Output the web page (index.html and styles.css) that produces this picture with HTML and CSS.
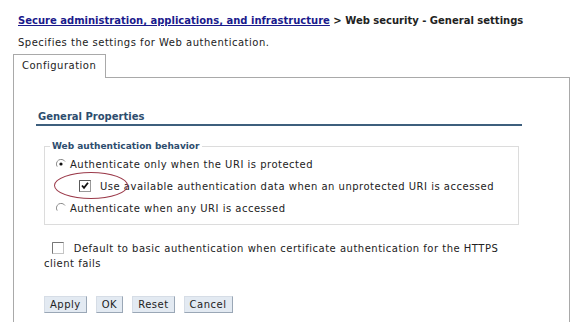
FILE: index.html
```html
<!DOCTYPE html>
<html lang="en">
  <head>
    <meta charset="UTF-8" />
    <title>Web security - General settings</title>
    <link rel="stylesheet" href="styles.css">
  </head>
  <body>
    <div class="breadcrumb">
      <a href="#">Secure administration, applications, and infrastructure</a>
      &gt; Web security - General settings
    </div>
    <p class="description">Specifies the settings for Web authentication.</p>

    <div class="tabs">
      <div class="tab">Configuration</div>
      <div class="tab-rest"></div>
    </div>

    <div class="panel">
      <h2 class="section-title">General Properties</h2>

      <fieldset class="group">
        <legend>Web authentication behavior</legend>
        <div class="option">
          <svg class="radio" width="10" height="10" viewBox="0 0 10 10">
            <path d="M9 2.5A4.5 4.5 0 0 0 1.2 7.6" fill="none" stroke="#8a8a8a" stroke-width="1"/>
            <circle cx="5" cy="5" r="1.6" fill="#111"/>
          </svg>
          <span>Authenticate only when the URI is protected</span>
        </div>
        <div class="option sub">
          <svg class="check" width="12" height="12" viewBox="0 0 12 12">
            <rect x="0.5" y="0.5" width="11" height="11" fill="#fff" stroke="#9a9a9a"/>
            <path d="M0.5 11.5V0.5H11.5" fill="none" stroke="#5a5a5a"/>
            <path d="M3 5.5l2 2.3 4-5" fill="none" stroke="#111" stroke-width="1.8"/>
          </svg>
          <span>Use available authentication data when an unprotected URI is accessed</span>
          <span class="highlight"></span>
        </div>
        <div class="option">
          <svg class="radio" width="10" height="10" viewBox="0 0 10 10">
            <path d="M9 2.5A4.5 4.5 0 0 0 1.2 7.6" fill="none" stroke="#8a8a8a" stroke-width="1"/>
          </svg>
          <span>Authenticate when any URI is accessed</span>
        </div>
      </fieldset>

      <div class="standalone">
        <svg class="check" width="12" height="12" viewBox="0 0 12 12">
          <rect x="0.5" y="0.5" width="11" height="11" fill="#fff" stroke="#c4c4c4"/>
          <path d="M0.5 11.5V0.5H11.5" fill="none" stroke="#777"/>
        </svg>
        Default to basic authentication when certificate authentication for the HTTPS client fails
      </div>

      <div class="buttons">
        <button>Apply</button>
        <button>OK</button>
        <button>Reset</button>
        <button>Cancel</button>
      </div>
    </div>
  </body>
</html>
```

FILE: styles.css
```css
* {
  box-sizing: border-box;
  margin: 0;
  padding: 0;
}

body {
  font-family: "DejaVu Sans", Verdana, sans-serif;
  font-size: 10px;
  letter-spacing: 0.5px;
  color: #222;
  background: #fff;
  padding: 14px 2px 0 13px;
}

.breadcrumb {
  font-weight: bold;
  letter-spacing: 0;
  padding-left: 5px;
  line-height: 14px;
}

.breadcrumb a {
  color: #1a1a8c;
}

.description {
  padding-left: 5px;
  margin-top: 8px;
  line-height: 14px;
}

.tabs {
  display: flex;
  margin-top: 4px;
  height: 24px;
}

.tab {
  width: 93px;
  border: 1px solid #a9a9a9;
  border-bottom: none;
  padding: 5px 0 0 8px;
}

.tab-rest {
  flex: 1;
  border-bottom: 1px solid #a9a9a9;
}

.panel {
  border: 1px solid #a9a9a9;
  border-top: none;
  border-bottom: none;
  height: 244px;
  padding: 33px 47px 0 22px;
}

.section-title {
  font-size: 10px;
  font-weight: bold;
  letter-spacing: 0;
  color: #2d4d6e;
  padding: 0 0 2px 2px;
  border-bottom: 2px solid #3d5f7d;
}

.group {
  border: 1px solid #dcdcdc;
  margin: 14px 3px 0 8px;
  padding: 1px 0 5px 11px;
}

.group legend {
  font-size: 9px;
  font-weight: bold;
  letter-spacing: 0;
  color: #2d4d6e;
  padding: 0 2px;
  margin-left: -6px;
  line-height: 12px;
}

.option {
  display: flex;
  align-items: center;
  gap: 4px;
  height: 22px;
  position: relative;
}

.option.sub {
  padding-left: 23px;
  gap: 9px;
}

.highlight {
  position: absolute;
  left: -2px;
  top: -3px;
  width: 74px;
  height: 27px;
  border: 1px solid #9b3a4a;
  border-radius: 50%;
}

.standalone {
  margin-top: 16px;
  padding-left: 8px;
  line-height: 15px;
  text-indent: 8px;
}

.standalone .check {
  vertical-align: -2px;
  margin-right: 6px;
}

.buttons {
  display: flex;
  gap: 9px;
  margin-top: 25px;
  padding-left: 8px;
}

button {
  font-family: inherit;
  font-size: 10px;
  letter-spacing: 0.5px;
  color: #222;
  background: #e3eaf2;
  border: 1px solid #9aa7b6;
  border-top-color: #d6dde6;
  border-left-color: #d6dde6;
  padding: 1px 5px;
  height: 17px;
}
```
